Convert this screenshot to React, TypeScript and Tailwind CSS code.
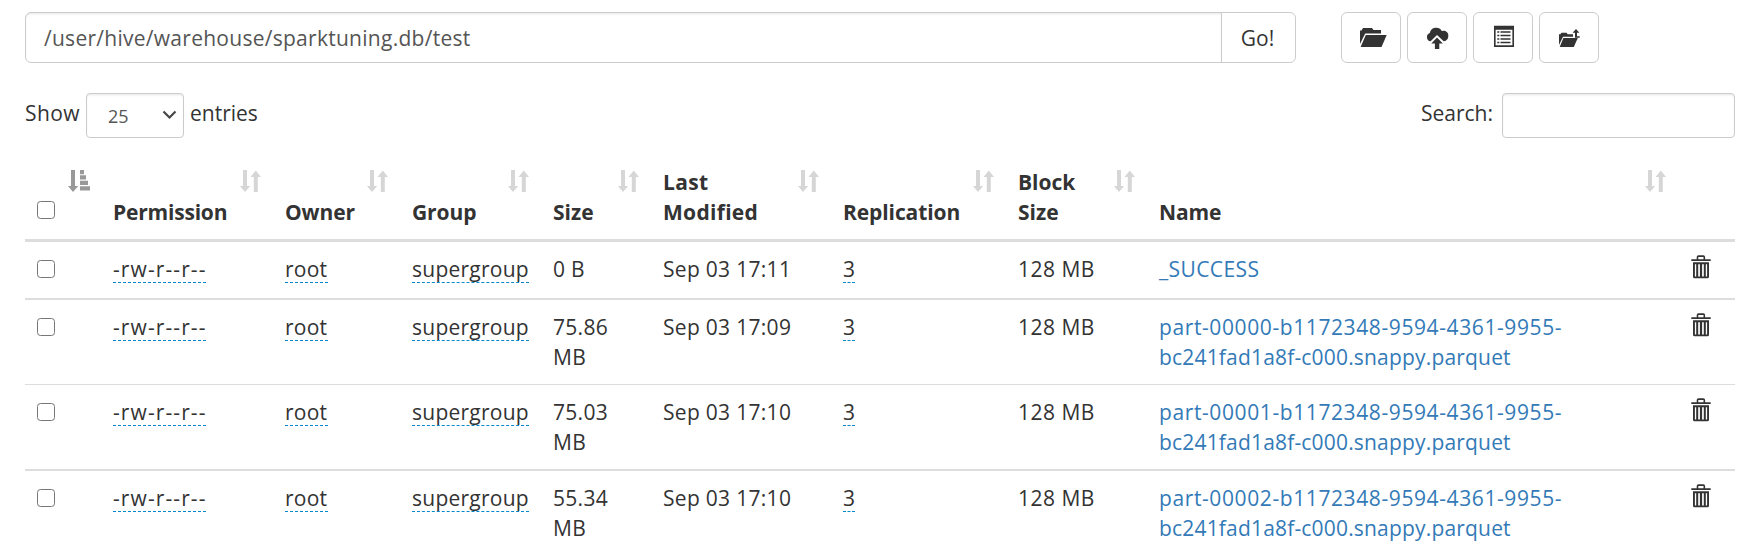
import type { ReactNode } from "react";

type FileRow = {
  size: string;
  modified: string;
  name: string[];
  edge: string;
  height: string;
};

const COLUMNS =
  "grid grid-cols-[76px_172px_127px_141px_110px_180px_175px_141px_531px_57px]";

const rows: FileRow[] = [
  {
    size: "0 B",
    modified: "Sep 03 17:11",
    name: ["_SUCCESS"],
    edge: "border-t-[3px]",
    height: "h-[59px]",
  },
  {
    size: "75.86 MB",
    modified: "Sep 03 17:09",
    name: ["part-00000-b1172348-9594-4361-9955-", "bc241fad1a8f-c000.snappy.parquet"],
    edge: "border-t-2",
    height: "h-[86px]",
  },
  {
    size: "75.03 MB",
    modified: "Sep 03 17:10",
    name: ["part-00001-b1172348-9594-4361-9955-", "bc241fad1a8f-c000.snappy.parquet"],
    edge: "border-t",
    height: "h-[85px]",
  },
  {
    size: "55.34 MB",
    modified: "Sep 03 17:10",
    name: ["part-00002-b1172348-9594-4361-9955-", "bc241fad1a8f-c000.snappy.parquet"],
    edge: "border-t-2",
    height: "h-[86px]",
  },
];

function SortIcon() {
  return (
    <svg className="mt-[3px] h-[23px] w-[21px] shrink-0" viewBox="0 0 21 23" fill="#d6d6d6">
      <path d="M3 0h4v16h3.2L5 22 0 16h3z" />
      <path d="M13.8 22V7h-3.3L15.8.5 21 7h-3.2v15z" />
    </svg>
  );
}

function SortActiveIcon() {
  return (
    <svg className="mt-[3px] h-[23px] w-[22px] shrink-0" viewBox="0 0 22 23" fill="#999999">
      <path d="M3 0h4v16h3.2L5 22 0 16h3z" />
      <path d="M12 0h4v4.300h-4zM12 5.300h6v4.300h-6zM12 10.700h8V15h-8zM12 16.200h10v4.300H12z" />
    </svg>
  );
}

function TrashIcon() {
  return (
    <svg className="h-[24px] w-[20px]" viewBox="0 0 20 24" fill="#333333">
      <path
        fillRule="evenodd"
        d="M.3 4.200h5.400V2q0-1.700 1.700-1.700h5q1.700 0 1.700 1.700v2.200h5.600V6H.3zM7.300 4.200h5.200V1.900H7.300z"
      />
      <path
        fillRule="evenodd"
        d="M2 7.300h16v14.400q0 1.600-1.600 1.600H3.600Q2 23.300 2 21.700zM3.900 9.200v12.300h1.300V9.200zM7.200 9.200v12.300h1.700V9.200zM11.100 9.200v12.300h1.700V9.200zM14.800 9.200v12.300h1.300V9.200z"
      />
    </svg>
  );
}

function ToolButton({ children }: { children: ReactNode }) {
  return (
    <button className="flex h-[51px] w-[60px] items-center justify-center rounded-[6px] border border-[#cccccc] bg-white">
      <svg className="h-[29px] w-[32px]" viewBox="0 0 32 29" fill="#333333">
        {children}
      </svg>
    </button>
  );
}

function Checkbox() {
  return (
    <input
      type="checkbox"
      className="block h-[18px] w-[18px] appearance-none rounded-[3.5px] border-[1.5px] border-[#767676] bg-white"
    />
  );
}

function Header({ label, spacing }: { label: string; spacing: string }) {
  return (
    <div className="flex justify-between p-3">
      <span className={`w-0 self-end font-bold ${label.includes(" ") ? "" : "whitespace-nowrap"} ${spacing}`}>
        {label}
      </span>
      <SortIcon />
    </div>
  );
}

function Editable({ children, width }: { children: ReactNode; width: string }) {
  return (
    <div className="p-3">
      <div className={`h-[29px] border-b border-dashed border-[#0088cc] whitespace-nowrap ${width}`}>
        {children}
      </div>
    </div>
  );
}

export default function App() {
  return (
    <div className="h-[555px] w-[1757px] overflow-hidden bg-white pl-[25px] pt-3 font-['Open_Sans','Noto_Sans',sans-serif] text-[21px] leading-[30px] text-[#333333]">
      <div className="flex">
        <div className="flex h-[51px] w-[1271px] rounded-[6px] border border-[#cccccc]">
          <div className="w-[1195px] rounded-l-[5px] pl-[18px] pt-[10px] tracking-[0.27px] text-[#555555] shadow-[inset_0_1.5px_1.5px_rgba(0,0,0,0.075)]">
            /user/hive/warehouse/sparktuning.db/test
          </div>
          <button className="flex-1 border-l border-[#cccccc] pr-[2px]">Go!</button>
        </div>
        <div className="ml-[45px] flex gap-[6px]">
          <ToolButton>
            <path d="M5 21V7.500h1.500L8 5h9l1.500 2H26v3.500H10.200z" />
            <path d="M10.800 12h20.900L26.500 24H5.600z" />
          </ToolButton>
          <ToolButton>
            <path d="M9.600 18.300A4.300 4.300 0 0 1 8.800 10 6.500 6.500 0 0 1 20.800 8a4.800 4.800 0 0 1 6.500 5q0 4.500-4.600 5.300L16 12z" />
            <path d="M16 14.500l5.800 6h-3.500V26h-4.400v-5.500h-3.600z" />
          </ToolButton>
          <ToolButton>
            <path fillRule="evenodd" d="M7 2.700h20V24H7zM8.600 6.800v15.500h16.800V6.800z" />
            <path d="M10.300 8.300h2v1.500h-2zM13.500 8.300h10v1.500h-10zM10.300 11.800h2v1.500h-2zM13.500 11.800h10v1.500h-10zM10.300 15.300h2v1.500h-2zM13.500 15.300h10v1.500h-10zM10.300 18.800h2v1.500h-2zM13.500 18.800h10v1.500h-10z" />
          </ToolButton>
          <ToolButton>
            <path d="M6 22V11.300h1.300l1.200-1.500h5l1.200 1.500h5.300v2.500H10z" />
            <path d="M10.400 15h14.400L20.800 24H6.700z" />
            <path d="M22 14.800v-5h-2.400L23 6l3.400 3.800h-2.400v3.400h2.700v1.600z" />
          </ToolButton>
        </div>
      </div>

      <div className="mt-[30px] flex w-[1710px]">
        <span className="mt-[5px] w-[61px] tracking-[0.4px]">Show</span>
        <div className="flex h-[45px] w-[98px] justify-between rounded-[4px] border border-[#cccccc] pl-[21px] pr-[6px] text-[18px] text-[#555555] shadow-[inset_0_1.5px_1.5px_rgba(0,0,0,0.075)]">
          <span className="mt-[7px]">25</span>
          <svg
            className="mt-[16px] h-[10px] w-[15px]"
            viewBox="0 0 15 10"
            fill="none"
            stroke="#444444"
            strokeWidth="2.100"
          >
            <path d="M1.500 1.500l6 6 6-6" />
          </svg>
        </div>
        <span className="ml-[6px] mt-[5px]">entries</span>
        <span className="ml-auto mt-[5px] mr-[9px]">Search:</span>
        <input className="h-[45px] w-[233px] rounded-[4px] border border-[#cccccc] shadow-[inset_0_1.5px_1.5px_rgba(0,0,0,0.075)] outline-none" />
      </div>

      <div className="mt-[17px] w-[1710px]">
        <div className={`${COLUMNS} h-[84px]`}>
          <div className="flex justify-between p-3 pr-[11px]">
            <div className="w-0 self-end pb-[8px]">
              <Checkbox />
            </div>
            <SortActiveIcon />
          </div>
          <Header label="Permission" spacing="tracking-[-0.200px]" />
          <Header label="Owner" spacing="tracking-[-0.100px]" />
          <Header label="Group" spacing="tracking-[-0.100px]" />
          <Header label="Size" spacing="tracking-[0px]" />
          <Header label="Last Modified" spacing="tracking-[0.300px]" />
          <Header label="Replication" spacing="tracking-[-0.100px]" />
          <Header label="Block Size" spacing="tracking-[0px]" />
          <Header label="Name" spacing="tracking-[-0.100px]" />
        </div>
        {rows.map((row) => (
          <div key={row.name[0]} className={`${COLUMNS} ${row.height} ${row.edge} border-[#dddddd]`}>
            <div className="pl-3 pt-[18px]">
              <Checkbox />
            </div>
            <Editable width="w-[93px]">
              <span className="tracking-[1.100px]">-rw-r--r--</span>
            </Editable>
            <Editable width="w-[43px]">
              <span className="tracking-[0.250px]">root</span>
            </Editable>
            <Editable width="w-[117px]">
              <span className="tracking-[0.250px]">supergroup</span>
            </Editable>
            <div className="p-3 tracking-[0.3px]">{row.size}</div>
            <div className="p-3 tracking-[0.3px]">{row.modified}</div>
            <Editable width="w-[12px]">3</Editable>
            <div className="p-3 tracking-[0.5px]">128 MB</div>
            <a className="block p-3 text-[#337ab7]">
              {row.name.map((line, i) => (
                <span
                  key={line}
                  className={`block whitespace-nowrap ${
                    row.name.length === 1
                      ? "tracking-[0.400px]"
                      : i === 0
                        ? "tracking-[0.600px]"
                        : "tracking-[0.180px]"
                  }`}
                >
                  {line}
                </span>
              ))}
            </a>
            <div className="pl-[13px] pt-[13px]">
              <TrashIcon />
            </div>
          </div>
        ))}
      </div>
    </div>
  );
}
